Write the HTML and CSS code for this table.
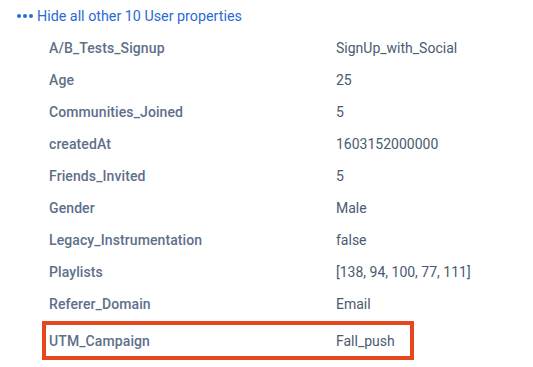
FILE: index.html
```html
<!DOCTYPE html>
<html>
<head>
<meta charset="utf-8">
<link rel="stylesheet" href="styles.css">
</head>
<body>
<div class="toggle">
  <span class="dots"><i></i><i></i><i></i></span>
  <span class="toggle-text">Hide all other 10 User properties</span>
</div>
<div class="props">
  <div class="row"><span class="key">A/B_Tests_Signup</span><span class="val">SignUp_with_Social</span></div>
  <div class="row"><span class="key">Age</span><span class="val">25</span></div>
  <div class="row"><span class="key">Communities_Joined</span><span class="val">5</span></div>
  <div class="row"><span class="key">createdAt</span><span class="val">1603152000000</span></div>
  <div class="row"><span class="key">Friends_Invited</span><span class="val">5</span></div>
  <div class="row"><span class="key">Gender</span><span class="val">Male</span></div>
  <div class="row"><span class="key">Legacy_Instrumentation</span><span class="val">false</span></div>
  <div class="row"><span class="key">Playlists</span><span class="val">[138, 94, 100, 77, 111]</span></div>
  <div class="row"><span class="key">Referer_Domain</span><span class="val">Email</span></div>
  <div class="row highlight"><span class="key">UTM_Campaign</span><span class="val">Fall_push</span></div>
</div>
</body>
</html>
```
FILE: styles.css
```css
html, body {
  margin: 0;
  padding: 0;
  background: #ffffff;
}
body {
  font-family: Roboto, "Noto Sans", sans-serif;
  font-size: 14px;
  width: 533px;
  height: 367px;
  overflow: hidden;
}
.toggle {
  display: flex;
  align-items: center;
  gap: 4px;
  padding: 6px 0 0 17px;
  height: 20px;
  color: #2a6bd1;
  font-size: 14.3px;
}
.dots {
  display: flex;
  gap: 2px;
}
.dots i {
  display: block;
  width: 4px;
  height: 4px;
  border-radius: 50%;
  background: #2a6bd1;
}
.props {
  display: flex;
  flex-direction: column;
  padding: 6px 0 0 42px;
}
.row {
  display: flex;
  align-items: center;
  height: 32px;
  width: 372px;
  box-sizing: border-box;
  padding-left: 7px;
  white-space: nowrap;
}
.key {
  flex: 0 0 287px;
  color: #5e6f8a;
  font-weight: 500;
  letter-spacing: 0.1px;
}
.val {
  color: #4a5a72;
}
.highlight {
  border: 4px solid #e8461e;
  height: 39px;
  margin-top: 1px;
  padding-left: 3px;
}
```
